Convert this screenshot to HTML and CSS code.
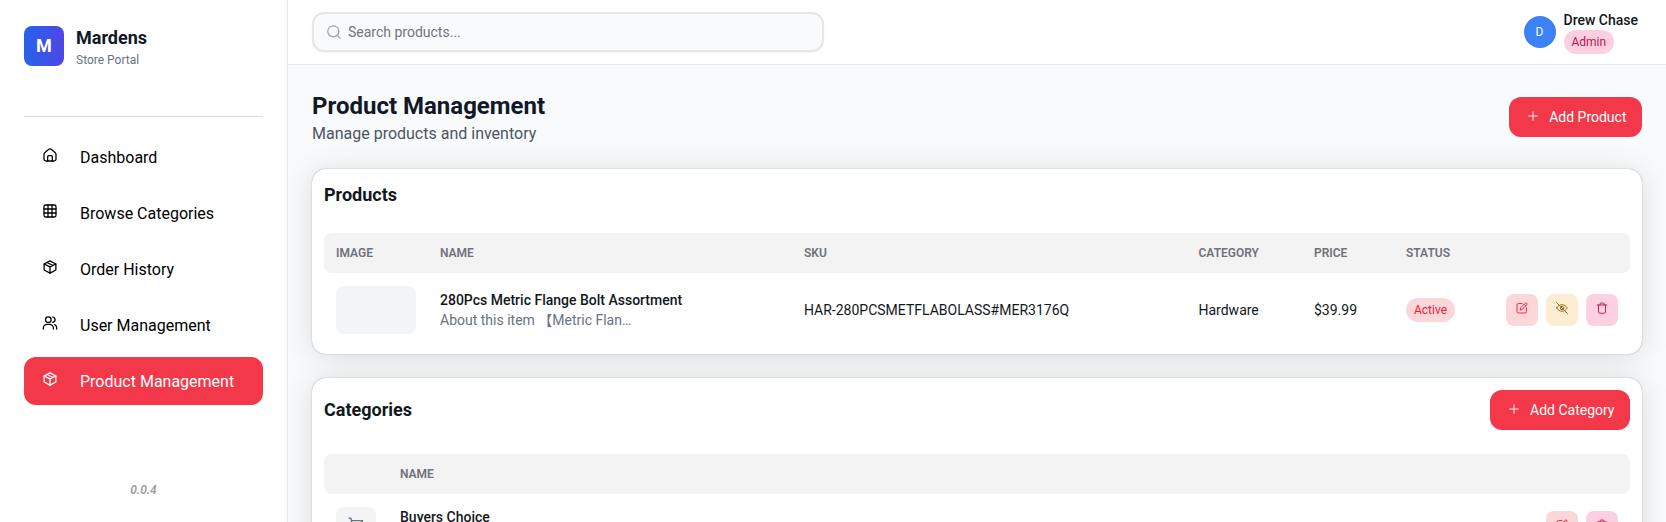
FILE: index.html
```html
<!DOCTYPE html>
<html lang="en">
<head>
<meta charset="utf-8">
<title>Mardens Store Portal</title>
<link rel="stylesheet" href="styles.css">
</head>
<body>
<svg class="sprite" aria-hidden="true">
  <symbol id="home" viewBox="0 0 24 24"><path d="M3 10.8c0-.9.4-1.7 1.1-2.3l6-5a3 3 0 0 1 3.8 0l6 5c.7.6 1.1 1.4 1.1 2.3V18a3 3 0 0 1-3 3H6a3 3 0 0 1-3-3z"/><path d="M8.500 21v-6.500a1.5 1.5 0 0 1 1.5-1.5h4a1.5 1.5 0 0 1 1.5 1.5V21"/></symbol>
  <symbol id="grid" viewBox="0 0 24 24"><rect x="3" y="3" width="18" height="18" rx="2.5"/><path d="M9 3v18M15 3v18M3 9h18M3 15h18"/></symbol>
  <symbol id="box" viewBox="0 0 24 24"><path d="M3.2 7.5 12 2.8l8.8 4.7v9L12 21.2l-8.8-4.7z"/><path d="m3.2 7.5 8.8 4.3 8.8-4.3M12 11.8v9.4M7.5 5.2l9 4.5"/></symbol>
  <symbol id="users" viewBox="0 0 24 24"><circle cx="9.5" cy="7" r="4.2"/><path d="M2 21v-1.500a5.500 5.500 0 0 1 5.500-5.500h4a5.500 5.500 0 0 1 5.500 5.500V21M16 3c4.800 1 4.800 7 0 8M19 14.500c2 .8 3 2.500 3 4.500v2"/></symbol>
  <symbol id="search" viewBox="0 0 24 24"><circle cx="11" cy="11" r="8.300"/><path d="m17.500 17.500 3.800 3.800"/></symbol>
  <symbol id="plus" viewBox="0 0 16 16"><path d="M8 3.600v8.800M3.600 8h8.800"/></symbol>
  <symbol id="edit" viewBox="0 0 24 24"><path d="M12 3H5a3 3 0 0 0-3 3v13a3 3 0 0 0 3 3h13a3 3 0 0 0 3-3v-7"/><path d="m8.500 15.500.8-4 9-9a2 2 0 0 1 3.200 3.200l-9 9zM16 4.500l3.500 3.500"/></symbol>
  <symbol id="hidden" viewBox="0 0 24 24"><path d="M1.500 12C4 7.500 8 5.500 12 5.500s8 2 10.500 6.500C20 16.500 16 18.500 12 18.500S4 16.500 1.500 12z"/><circle cx="12" cy="12" r="3.500"/><path d="m1 1 22 22"/></symbol>
  <symbol id="trash" viewBox="0 0 24 24"><path d="M2.500 6h19M5 6v14a2.500 2.500 0 0 0 2.500 2.500h9A2.500 2.500 0 0 0 19 20V6M8 5.500V4A2 2 0 0 1 10 2h4a2 2 0 0 1 2 2v1.500"/></symbol>
  <symbol id="cart" viewBox="0 0 24 24"><path d="M3.500 2.500h2.300l2.500 12h9.500l2-9H6.500"/><circle cx="9" cy="19" r="1.500"/><circle cx="17" cy="19" r="1.500"/></symbol>
</svg>
<div class="app">
  <aside class="sidebar">
    <div class="brand">
      <div class="logo">M</div>
      <div><div class="brand-name">Mardens</div><div class="brand-sub">Store Portal</div></div>
    </div>
    <nav class="nav">
      <a class="nav-item"><svg class="icon"><use href="#home"/></svg><span>Dashboard</span></a>
      <a class="nav-item"><svg class="icon"><use href="#grid"/></svg><span>Browse Categories</span></a>
      <a class="nav-item"><svg class="icon"><use href="#box"/></svg><span>Order History</span></a>
      <a class="nav-item"><svg class="icon"><use href="#users"/></svg><span>User Management</span></a>
      <a class="nav-item active"><svg class="icon"><use href="#box"/></svg><span>Product Management</span></a>
    </nav>
    <div class="version">0.0.4</div>
  </aside>
  <div class="main">
    <header class="topbar">
      <div class="search"><svg class="icon"><use href="#search"/></svg><span>Search products...</span></div>
      <div class="user">
        <div class="avatar">D</div>
        <div class="user-info"><div class="user-name">Drew Chase</div><span class="chip chip-admin">Admin</span></div>
      </div>
    </header>
    <main class="content">
      <div class="page-head">
        <div class="page-title"><h1>Product Management</h1><p>Manage products and inventory</p></div>
        <button class="btn"><svg class="icon"><use href="#plus"/></svg>Add Product</button>
      </div>
      <section class="card">
        <div class="card-head"><h2>Products</h2></div>
        <div class="table products">
          <div class="row head"><div>IMAGE</div><div>NAME</div><div>SKU</div><div>CATEGORY</div><div>PRICE</div><div>STATUS</div><div></div></div>
          <div class="row body">
            <div><div class="thumb"></div></div>
            <div><div class="name">280Pcs Metric Flange Bolt Assortment</div><div class="desc">About this item 【Metric Flan…</div></div>
            <div>HAR-280PCSMETFLABOLASS#MER3176Q</div>
            <div>Hardware</div>
            <div>$39.99</div>
            <div><span class="chip chip-active">Active</span></div>
            <div class="actions">
              <button class="act red"><svg class="icon"><use href="#edit"/></svg></button>
              <button class="act amber"><svg class="icon"><use href="#hidden"/></svg></button>
              <button class="act pink"><svg class="icon"><use href="#trash"/></svg></button>
            </div>
          </div>
        </div>
      </section>
      <section class="card">
        <div class="card-head"><h2>Categories</h2><button class="btn"><svg class="icon"><use href="#plus"/></svg>Add Category</button></div>
        <div class="table categories">
          <div class="row head"><div></div><div>NAME</div><div></div></div>
          <div class="row body">
            <div><div class="cat-icon"><svg class="icon"><use href="#cart"/></svg></div></div>
            <div class="cat-name"><div class="name">Buyers Choice</div></div>
            <div class="actions">
              <button class="act red"><svg class="icon"><use href="#edit"/></svg></button>
              <button class="act pink"><svg class="icon"><use href="#trash"/></svg></button>
            </div>
          </div>
        </div>
      </section>
    </main>
  </div>
</div>
</body>
</html>
```
FILE: styles.css
```css
* { box-sizing: border-box; margin: 0; }
body { font-family: Roboto, "Noto Sans CJK SC", sans-serif; font-size: 14px; line-height: 20px; color: #11181c; background: #f9fafc; overflow: hidden; }
button { font: inherit; border: 0; }
.sprite { display: none; }
.icon { fill: none; stroke: currentColor; stroke-linecap: round; stroke-linejoin: round; flex: none; }
.app { display: flex; height: 522px; overflow: hidden; }

.sidebar { width: 288px; flex: none; background: #fff; border-right: 1px solid #e5e7eb; padding: 24px 24px 22px; display: flex; flex-direction: column; }
.brand { display: flex; align-items: center; gap: 12px; height: 44px; }
.logo { width: 40px; height: 40px; border-radius: 8px; background: linear-gradient(to right, #2563eb, #4f46e5); color: #fff; font-weight: 700; font-size: 18px; display: flex; align-items: center; justify-content: center; }
.brand-name { font-size: 18px; line-height: 28px; font-weight: 700; color: #111827; }
.brand-sub { font-size: 12px; line-height: 16px; color: #6b7280; }
.nav { margin-top: 48px; border-top: 1px solid #dbdbdb; padding-top: 16px; display: flex; flex-direction: column; gap: 8px; color: #000; }
.nav-item { height: 48px; border-radius: 12px; display: flex; align-items: center; padding-left: 18px; gap: 22px; font-size: 16px; }
.nav-item span { padding-top: 2px; }
.nav-item .icon { width: 16px; height: 16px; margin-bottom: 4px; stroke-width: 1.9; }
.nav-item.active { background: #f23849; color: #fff; }
.version { margin-top: auto; text-align: center; font-size: 12px; font-weight: 600; font-style: italic; color: #9c9c9c; }

.main { flex: 1; min-width: 0; display: flex; flex-direction: column; }
.topbar { height: 65px; flex: none; background: #fff; border-bottom: 1px solid #e5e7eb; padding: 0 28px 0 24px; display: flex; align-items: center; justify-content: space-between; }
.search { width: 512px; height: 40px; border: 2px solid #e5e7eb; border-radius: 12px; background: #f9fafc; box-shadow: 0 1px 2px rgba(0,0,0,.05); display: flex; align-items: center; gap: 6px; padding-left: 12px; color: #71757d; }
.search .icon { width: 16px; height: 16px; color: #9ca3af; stroke-width: 1.9; }
.user { display: flex; align-items: center; gap: 8px; }
.avatar { width: 32px; height: 32px; border-radius: 50%; background: #3b82f6; color: #fff; font-size: 12px; display: flex; align-items: center; justify-content: center; }
.user-info { display: flex; flex-direction: column; align-items: flex-start; }
.user-name { font-weight: 500; }
.chip { display: inline-flex; align-items: center; height: 24px; padding: 0 8px; border-radius: 12px; font-size: 12px; vertical-align: middle; }
.chip-admin { background: #fcd0e0; color: #c20e4d; }
.chip-active { background: #fcd7da; color: #f31a36; }

.content { flex: 1; min-height: 0; padding: 24px; display: flex; flex-direction: column; gap: 24px; overflow: hidden; }
.page-head { height: 56px; display: flex; justify-content: space-between; align-items: center; }
.page-title { padding-top: 2px; }
h1 { font-size: 24px; line-height: 32px; font-weight: 700; color: #111827; }
.page-head p { font-size: 16px; line-height: 24px; color: #4b5563; }
.btn { height: 40px; border-radius: 12px; background: #f23849; color: #fff; padding: 0 15.500px 0 16px; display: flex; align-items: center; gap: 8.500px; white-space: nowrap; }
.btn .icon { width: 16px; height: 16px; margin-bottom: 2px; stroke-width: .9; }
.card { flex: none; background: #fff; border-radius: 14px; padding: 12px; box-shadow: 0 0 5px rgba(0,0,0,.03), 0 2px 30px rgba(0,0,0,.12), 0 0 1px rgba(0,0,0,.45); }
.card-head { display: flex; align-items: center; justify-content: space-between; margin-bottom: 24px; }
h2 { font-size: 18px; line-height: 28px; font-weight: 700; }
.row { display: grid; align-items: center; }
.row > div { padding-left: 12px; white-space: nowrap; }
.products .row { grid-template-columns: 104px 364px 394.500px 115.500px 92px 1fr auto; }
.categories .row { grid-template-columns: 64px 1fr auto; }
.head { height: 40px; border-radius: 8px; background: #f3f3f3; color: #71717a; font-size: 12px; font-weight: 600; }
.body { margin-top: 5px; padding: 8px 0; }
.thumb { width: 80px; height: 48px; border-radius: 8px; background: #f3f4f6; }
.name { font-weight: 500; }
.desc { color: #6b7280; }
.actions { display: flex; gap: 8px; padding-right: 12px; }
.act { width: 32px; height: 32px; border-radius: 8px; padding: 0; display: flex; align-items: center; justify-content: center; }
.act .icon { width: 12px; height: 12px; margin-bottom: 4px; stroke-width: 1.8; }
.red { background: #fcd7da; color: #f31a36; }
.amber { background: #fdedd3; color: #936316; }
.pink { background: #fcd0e0; color: #c20e4d; }
.cat-icon { width: 40px; height: 40px; border-radius: 8px; background: #f3f4f6; color: #6b7280; display: flex; align-items: center; justify-content: center; }
.cat-icon .icon { width: 20px; height: 20px; margin-bottom: 3px; stroke-width: 1.7; }
.cat-name { height: 40px; }
```
